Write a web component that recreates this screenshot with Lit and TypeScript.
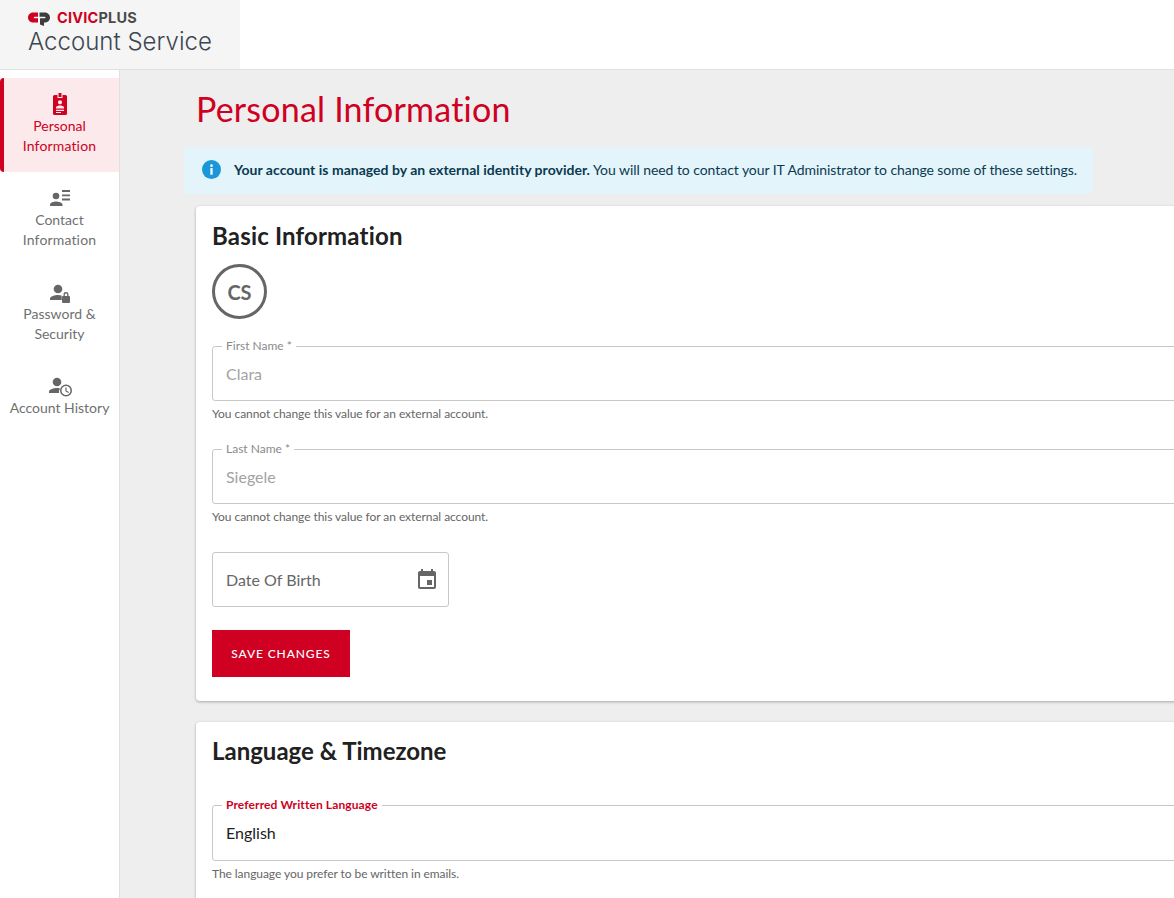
import { LitElement, html, css, svg } from 'lit';
import { customElement } from 'lit/decorators.js';

const navItems = [
  {
    label: ['Personal', 'Information'],
    active: true,
    icon: svg`<path d="M10.500 1h3v4h-3z"/><path fill-rule="evenodd" d="M6.500 3h3v3h5V3h3A1.500 1.500 0 0 1 19 4.500v17a1.500 1.500 0 0 1-1.500 1.500h-11A1.500 1.500 0 0 1 5 21.500v-17A1.500 1.500 0 0 1 6.500 3z M12 8.200a2.100 2.100 0 1 0 0 4.200 2.100 2.100 0 0 0 0-4.200z M8 16.500h8v-1.300c0-1.200-2.700-1.800-4-1.800s-4 .6-4 1.800z M8 17.800V19h8v-1.200z M8 20v1h5v-1z"/>`,
  },
  {
    label: ['Contact', 'Information'],
    icon: svg`<circle cx="8" cy="10" r="3.300"/><path d="M2 20v-1.300c0-2.200 3.700-3.200 6-3.200s6.500 1 6.500 3.200V20z"/><path d="M14 4h8v1.900h-8zM14 8.400h8v1.900h-8zM14 12.600h8v1.900h-8z"/>`,
  },
  {
    label: ['Password &', 'Security'],
    icon: svg`<circle cx="10" cy="9" r="4.300"/><path d="M2 20v-1.500c0-2.300 5-3.500 8-3.500 1.200 0 2.500.2 3.700.5v4.500z"/><path fill-rule="evenodd" d="M15.500 16v-1.400a2.500 2.500 0 0 1 5 0V16h.5a1 1 0 0 1 1 1v5a1 1 0 0 1-1 1h-6a1 1 0 0 1-1-1v-5a1 1 0 0 1 1-1zm1.300 0h2.400v-1.400a1.200 1.200 0 0 0-2.400 0z"/>`,
  },
  {
    label: ['Account History'],
    icon: svg`<circle cx="9" cy="8" r="4.300"/><path d="M1 19v-1.500c0-2.300 5-3.500 8-3.500 1 0 2 .1 3 .4A7 7 0 0 0 11 19z"/><path fill-rule="evenodd" d="M18 10.500a6 6 0 1 1 0 12 6 6 0 0 1 0-12zm0 1.500a4.500 4.500 0 1 0 0 9 4.500 4.500 0 0 0 0-9z M17.400 13.500h1.200v3.200l2.400 1.400-.6 1-3-1.800z"/>`,
  },
];

@customElement('app-root')
export class AppRoot extends LitElement {
  static styles = css`
    :host {
      display: block;
      height: 898px;
      overflow: hidden;
      font-family: Lato, 'Open Sans', sans-serif;
      font-variant-ligatures: none;
      color: #212121;
      background: #fff;
    }
    .top {
      height: 69px;
      border-bottom: 1px solid #e0e0e0;
      background: #fff;
    }
    .brand {
      width: 240px;
      height: 69px;
      box-sizing: border-box;
      padding: 9px 0 0 28px;
      background: #f5f5f5;
    }
    .logo {
      display: flex;
      align-items: center;
      gap: 7px;
      height: 17px;
      font-family: Inter, sans-serif;
      font-weight: 700;
      font-size: 14.500px;
      letter-spacing: 0.2px;
    }
    .logo svg {
      display: block;
      margin-top: 3px;
    }
    .logo b {
      color: #cf0022;
      font-weight: 700;
    }
    .logo span {
      color: #4a4a4a;
    }
    .app {
      font-family: Inter, sans-serif;
      font-weight: 300;
      font-size: 24px;
      line-height: 31px;
      letter-spacing: 0.02px;
      color: #3c4650;
    }
    .body {
      display: flex;
      height: 828px;
    }
    nav {
      width: 119px;
      flex: none;
      border-right: 1px solid #e0e0e0;
      padding-top: 8px;
      background: #fff;
    }
    .item {
      height: 94px;
      box-sizing: border-box;
      padding-top: 14px;
      display: flex;
      flex-direction: column;
      align-items: center;
      text-align: center;
      font-size: 14px;
      line-height: 20px;
      color: #707070;
    }
    .item .wide {
      letter-spacing: 0.15px;
    }
    .item svg {
      width: 24px;
      height: 24px;
      fill: #666;
    }
    .item.active {
      background: #fbe9ec;
      color: #cf0022;
      border-left: 4px solid #cf0022;
      border-radius: 4px 0 0 4px;
      padding-right: 4px;
    }
    .item.active svg {
      fill: #cf0022;
    }
    main {
      flex: 1;
      min-width: 0;
      background: #eee;
      overflow: hidden;
      padding-left: 64px;
    }
    h1 {
      margin: 18px 0 18px 12px;
      font-weight: 400;
      font-size: 34px;
      line-height: 41px;
      letter-spacing: 0.2px;
      color: #cf0022;
    }
    .alert {
      width: 909px;
      height: 47px;
      box-sizing: border-box;
      display: flex;
      align-items: center;
      gap: 13px;
      padding: 0 0 2px 18px;
      background: #e3f4fb;
      border-radius: 4px;
      font-size: 14px;
      letter-spacing: -0.06px;
      color: #0b3a50;
      white-space: nowrap;
    }
    .alert strong {
      letter-spacing: 0.02px;
    }
    .alert svg {
      width: 19px;
      height: 19px;
      flex: none;
    }
    .card {
      width: 1100px;
      margin: 12px 0 0 12px;
      box-sizing: border-box;
      padding: 17px 16px 24px;
      background: #fff;
      border-radius: 4px;
      box-shadow: 0 1px 3px rgba(0, 0, 0, 0.3);
    }
    .card + .card {
      margin-top: 21px;
      padding-top: 16px;
    }
    h2 {
      margin: 0;
      font-weight: 700;
      font-size: 24px;
      line-height: 26px;
      color: #212121;
    }
    h2.basic {
      letter-spacing: 0.18px;
    }
    .avatar {
      width: 55px;
      height: 55px;
      box-sizing: border-box;
      margin: 15px 0 21px;
      border: 3px solid #666;
      border-radius: 50%;
      display: flex;
      align-items: center;
      justify-content: center;
      font-size: 20px;
      font-weight: 700;
      color: #666;
    }
    .lang {
      margin-top: 35px;
    }
    .lang fieldset {
      height: 62px;
    }
    .field {
      margin-bottom: 21px;
    }
    fieldset {
      margin: 0;
      padding: 0 13px;
      height: 61px;
      box-sizing: border-box;
      border: 1px solid #c8c8c8;
      border-radius: 3px;
      display: block;
    }
    legend {
      margin-left: -4px;
      padding: 0 4px;
      font-size: 12px;
      line-height: 12px;
      height: 12px;
      color: #8a8a8a;
    }
    legend.focus {
      color: #cf0022;
      font-weight: 700;
      letter-spacing: 0.11px;
    }
    .value {
      font-size: 16px;
      line-height: 24px;
      margin-top: 10px;
      color: #a3a3a3;
    }
    .value.on {
      color: #212121;
    }
    .help {
      margin: 5px 0 0;
      font-size: 12px;
      line-height: 16px;
      letter-spacing: -0.06px;
      color: #666;
    }
    .date {
      width: 237px;
      height: 55px;
      box-sizing: border-box;
      margin-top: 27px;
      padding: 0 9px 0 13px;
      display: flex;
      align-items: center;
      justify-content: space-between;
      border: 1px solid #c8c8c8;
      border-radius: 3px;
      font-size: 16px;
      color: #666;
    }
    .date svg {
      width: 24px;
      height: 24px;
      fill: #666;
    }
    button {
      display: block;
      width: 138px;
      height: 47px;
      margin-top: 23px;
      border: 0;
      border-radius: 0;
      background: #cf0022;
      color: #fff;
      font-family: inherit;
      font-size: 12px;
      font-weight: 500;
      letter-spacing: 0.9px;
      text-transform: uppercase;
    }
  `;

  render() {
    return html`
      <div class="top">
        <div class="brand">
          <div class="logo">
            <svg width="22" height="14" viewBox="0 0 22 14">
              <path fill="#cf0022" d="M5.500 .5H10v4.300H6.500a.7.7 0 0 0 0 1.400H10v4.300H5.500C2.500 10.500 0 8.500 0 5.500S2.500 .5 5.500 .5z" />
              <path fill="#3c3c3c" d="M11.500 .5h5C19.500 .5 22 2.500 22 5.500s-2.500 5-5.500 5H16v3.500l-4-1.500V6.200h4.800a.7.7 0 0 0 0-1.400h-5.300z" />
            </svg>
            <div><b>CIVIC</b><span>PLUS</span></div>
          </div>
          <div class="app">Account Service</div>
        </div>
      </div>
      <div class="body">
        <nav>
          ${navItems.map(
            (n) => html`
              <div class="item ${n.active ? 'active' : ''}">
                <svg viewBox="0 0 24 24">${n.icon}</svg>
                ${n.label.map((l) => html`<div class=${l === 'Information' ? 'wide' : ''}>${l}</div>`)}
              </div>
            `,
          )}
        </nav>
        <main>
          <h1>Personal Information</h1>
          <div class="alert">
            <svg viewBox="0 0 20 20">
              <circle cx="10" cy="10" r="10" fill="#1a96d9" />
              <rect x="8.800" y="8.500" width="2.400" height="7" fill="#fff" />
              <circle cx="10" cy="6" r="1.400" fill="#fff" />
            </svg>
            <div>
              <strong>Your account is managed by an external identity provider.</strong>
              You will need to contact your IT Administrator to change some of these settings.
            </div>
          </div>
          <section class="card">
            <h2 class="basic">Basic Information</h2>
            <div class="avatar">CS</div>
            <div class="field">
              <fieldset>
                <legend>First Name *</legend>
                <div class="value">Clara</div>
              </fieldset>
              <p class="help">You cannot change this value for an external account.</p>
            </div>
            <div class="field">
              <fieldset>
                <legend>Last Name *</legend>
                <div class="value">Siegele</div>
              </fieldset>
              <p class="help">You cannot change this value for an external account.</p>
            </div>
            <div class="date">
              <span>Date Of Birth</span>
              <svg viewBox="0 0 24 24">
                <path d="M17 12h-5v5h5v-5zM16 1v2H8V1H6v2H5c-1.100 0-2 .9-2 2v14c0 1.100.9 2 2 2h14c1.100 0 2-.9 2-2V5c0-1.100-.9-2-2-2h-1V1h-2zm3 18H5V8h14v11z" />
              </svg>
            </div>
            <button>Save Changes</button>
          </section>
          <section class="card">
            <h2>Language &amp; Timezone</h2>
            <div class="lang">
              <fieldset>
                <legend class="focus">Preferred Written Language</legend>
                <div class="value on">English</div>
              </fieldset>
              <p class="help">The language you prefer to be written in emails.</p>
            </div>
          </section>
        </main>
      </div>
    `;
  }
}
